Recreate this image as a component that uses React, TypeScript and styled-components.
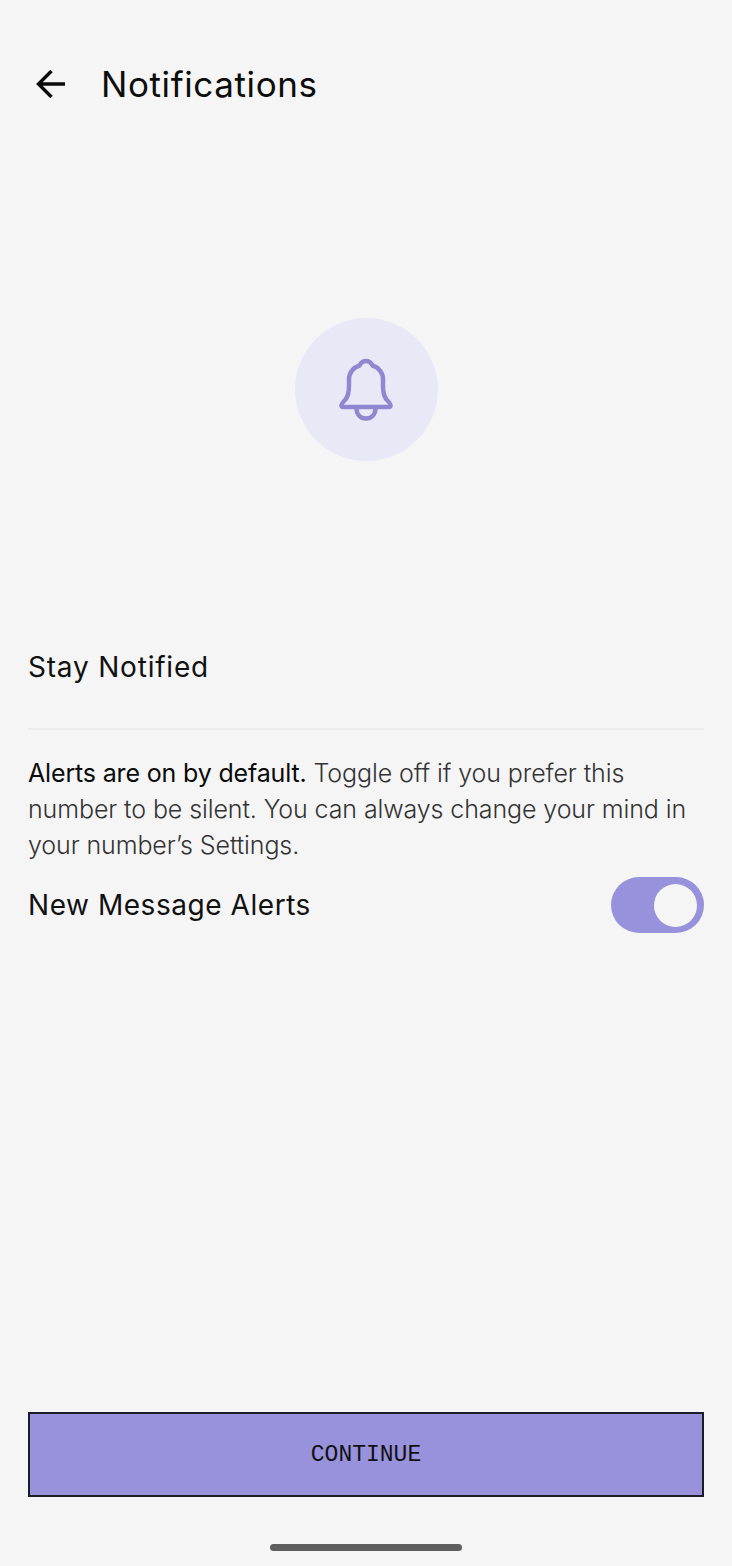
import React from "react";
import styled, { createGlobalStyle } from "styled-components";

const Global = createGlobalStyle`
  html, body { margin: 0; padding: 0; background: #f5f5f5; }
  body { font-family: Inter, "Liberation Sans", sans-serif; }
`;

const Screen = styled.div`
  width: 732px;
  height: 1566px;
  background: #f5f5f5;
  display: flex;
  flex-direction: column;
  color: #111;
  overflow: hidden;
`;

const Header = styled.header`
  height: 44px;
  margin-top: 62px;
  padding-left: 34px;
  display: flex;
  align-items: center;
  gap: 35px;
`;

const BackIcon = styled.svg`
  width: 32px;
  height: 32px;
  display: block;
`;

const Title = styled.h1`
  margin: 0;
  font-size: 35px;
  line-height: 44px;
  font-weight: 400;
  letter-spacing: 0.6px;
  color: #0d0d0d;
`;

const Hero = styled.div`
  margin-top: 212px;
  display: flex;
  justify-content: center;
`;

const BellCircle = styled.div`
  width: 143px;
  height: 143px;
  border-radius: 50%;
  background: #e9e8f7;
  display: flex;
  align-items: center;
  justify-content: center;
`;

const BellIcon = styled.svg`
  width: 56px;
  height: 64px;
  display: block;
`;

const Section = styled.section`
  margin-top: 187px;
  padding: 0 28px;
  display: flex;
  flex-direction: column;
`;

const SectionTitle = styled.h2`
  margin: 0;
  font-size: 28px;
  line-height: 38px;
  font-weight: 400;
  letter-spacing: 0.8px;
  color: #111;
`;

const Divider = styled.hr`
  margin: 42px 0 25px;
  border: 0;
  height: 2px;
  background: #ececec;
`;

const Body = styled.p`
  margin: 0;
  font-size: 25px;
  line-height: 36px;
  font-weight: 300;
  letter-spacing: -0.1px;
  color: #333;
`;

const Strong = styled.strong`
  font-weight: 400;
  letter-spacing: -0.16px;
  color: #0a0a0a;
`;

const ToggleRow = styled.div`
  margin-top: 14px;
  display: flex;
  align-items: center;
  justify-content: space-between;
`;

const ToggleLabel = styled.span`
  font-size: 28px;
  line-height: 38px;
  font-weight: 400;
  letter-spacing: 0.55px;
  color: #111;
`;

const Toggle = styled.div`
  width: 93px;
  height: 56px;
  border-radius: 28px;
  background: #9891db;
  padding: 7px;
  box-sizing: border-box;
  display: flex;
  justify-content: flex-end;
`;

const Knob = styled.div`
  width: 43px;
  height: 43px;
  border-radius: 50%;
  background: #f5f5f5;
`;

const Footer = styled.div`
  margin-top: auto;
  padding: 0 28px;
  display: flex;
  flex-direction: column;
  align-items: center;
`;

const ContinueButton = styled.button`
  width: 100%;
  height: 85px;
  box-sizing: border-box;
  background: #9891db;
  border: 2px solid #1c1c28;
  border-radius: 0;
  font-family: "Liberation Mono", monospace;
  font-size: 23px;
  color: #111;
  padding: 0;
`;

const HomeBar = styled.div`
  margin: 47px 0 15px;
  width: 192px;
  height: 7px;
  border-radius: 4px;
  background: #5f5f5f;
`;

export default function App() {
  return (
    <Screen>
      <Global />
      <Header>
        <BackIcon viewBox="0 0 32 32" fill="none" stroke="#0a0a0a" strokeWidth="3.4">
          <path d="M31 16H5M17.5 3L4.5 16L17.5 29" />
        </BackIcon>
        <Title>Notifications</Title>
      </Header>
      <Hero>
        <BellCircle>
          <BellIcon viewBox="0 0 56 64" fill="none" stroke="#8f87d0" strokeWidth="4.5" strokeLinejoin="round" strokeLinecap="round">
            <path d="M28 3c3 0 5 1.500 6.500 4.500c6 2 10.500 7 10.500 14v6c0 6 1 11 3.500 14c2 2 4 4 4 6c0 1-1 1.500-2 1.500H5.500c-1 0-2-.5-2-1.500c0-2 2-4 4-6c2.500-3 3.500-8 3.500-14v-6c0-7 4.500-12 10.500-14c1.500-3 3.500-4.500 6.500-4.500z" />
            <path d="M18.500 50c0 6.500 4 10.500 9.500 10.500s9.500-4 9.500-10.500" />
          </BellIcon>
        </BellCircle>
      </Hero>
      <Section>
        <SectionTitle>Stay Notified</SectionTitle>
        <Divider />
        <Body>
          <Strong>Alerts are on by default.</Strong> Toggle off if you prefer this number to be silent. You can always change your mind in your number’s Settings.
        </Body>
        <ToggleRow>
          <ToggleLabel>New Message Alerts</ToggleLabel>
          <Toggle>
            <Knob />
          </Toggle>
        </ToggleRow>
      </Section>
      <Footer>
        <ContinueButton>CONTINUE</ContinueButton>
        <HomeBar />
      </Footer>
    </Screen>
  );
}
